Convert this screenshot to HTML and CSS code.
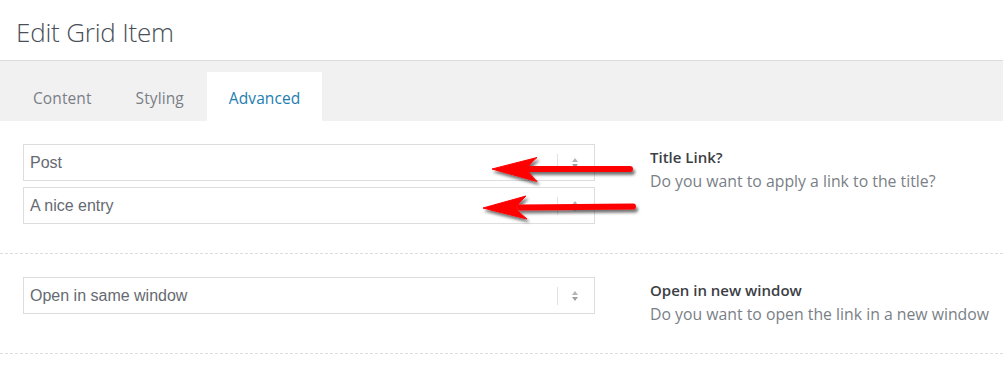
FILE: index.html
```html
<!DOCTYPE html>
<html lang="en">
<head>
    <meta charset="UTF-8" />
    <meta name="viewport" content="width=device-width, initial-scale=1.0" />
    <title>Edit Grid Item</title>
    <link rel="stylesheet" href="styles.css">
</head>
<body>
    <div class="modal">
        <div class="modal__header">
            <h1 class="modal__title">Edit Grid Item</h1>
        </div>
        <ul class="modal-tabs">
            <li class="modal-tabs__item">Content</li>
            <li class="modal-tabs__item">Styling</li>
            <li class="modal-tabs__item modal-tabs__item--active">Advanced</li>
        </ul>
        <div class="modal__body">
            <div class="field-row">
                <div class="field-row__inputs">
                    <div class="select-box">
                        <span class="select-box__value">Post</span>
                        <span class="select-box__caret"></span>
                    </div>
                    <div class="select-box">
                        <span class="select-box__value">A nice entry</span>
                        <span class="select-box__caret"></span>
                    </div>
                </div>
                <div class="field-row__label">
                    <div class="field-label__title">Title Link?</div>
                    <div class="field-label__desc">Do you want to apply a link to the title?</div>
                </div>
            </div>
            <div class="field-row field-row--last">
                <div class="field-row__inputs">
                    <div class="select-box">
                        <span class="select-box__value">Open in same window</span>
                        <span class="select-box__caret"></span>
                    </div>
                </div>
                <div class="field-row__label">
                    <div class="field-label__title">Open in new window</div>
                    <div class="field-label__desc">Do you want to open the link in a new window</div>
                </div>
            </div>
        </div>

        <!-- annotation arrows drawn over the screenshot -->
        <svg class="annotation" width="1003" height="371" viewBox="0 0 1003 371">
            <defs>
                <filter id="arrow-shadow" x="-20%" y="-50%" width="140%" height="200%">
                    <feDropShadow dx="2" dy="3" stdDeviation="1.6" flood-color="#000" flood-opacity="0.55" />
                </filter>
            </defs>
            <g fill="#f00" stroke="#f00" filter="url(#arrow-shadow)">
                <line x1="528" y1="169" x2="630" y2="169" stroke-width="6" stroke-linecap="round" />
                <path d="M492 169 L537 157.5 Q530 163 527 169 Q530 175 537 181.5 Z" stroke-width="1" stroke-linejoin="round" />
                <line x1="520" y1="207.5" x2="633" y2="206.5" stroke-width="6" stroke-linecap="round" />
                <path d="M483 208 L526 196 Q519 202 516 208 Q519 213 527 219 Z" stroke-width="1" stroke-linejoin="round" />
            </g>
        </svg>
    </div>
</body>
</html>
```

FILE: styles.css
```css
/* General styles */
body {
  margin: 0;
  background: #fff;
  font-family: "Open Sans", "Noto Sans", sans-serif;
}

.modal {
  position: relative;
  width: 1003px;
  height: 371px;
  overflow: hidden;
}

.modal__header {
  height: 61px;
  border-bottom: 1px solid #dcdcdc;
  box-sizing: border-box;
  padding: 0 16px;
}

.modal__title {
  margin: 0;
  font-size: 26px;
  font-weight: 300;
  line-height: 64px;
  color: #4a4f57;
  letter-spacing: -0.2px;
}

/* Tabs */
.modal-tabs {
  display: flex;
  margin: 0;
  padding: 11px 0 0 11px;
  list-style: none;
  background: #f1f1f1;
  height: 60px;
  box-sizing: border-box;
}

.modal-tabs__item {
  padding: 0 22px;
  height: 49px;
  line-height: 53px;
  font-size: 15.5px;
  letter-spacing: 0.1px;
  color: #7a7f87;
}

.modal-tabs__item:nth-child(2) {
  padding-right: 23px;
}

.modal-tabs__item--active {
  background: #fff;
  color: #1e7db0;
}

/* Field rows */
.field-row {
  display: flex;
  align-items: flex-start;
  padding: 23px 0 29px 23px;
  border-bottom: 1px dashed #dcdcdc;
}

.field-row--last {
  padding-bottom: 39px;
}

.field-row__inputs {
  display: flex;
  flex-direction: column;
  gap: 6px;
  width: 572px;
}

.select-box {
  display: flex;
  align-items: center;
  height: 37px;
  border: 1px solid #dddddd;
  box-sizing: border-box;
  padding-left: 6px;
  font-family: "Liberation Sans", Arial, sans-serif;
  font-size: 16px;
  color: #666a70;
}

.select-box__value {
  flex: 1;
}

.select-box__caret {
  position: relative;
  width: 36px;
  height: 18px;
  border-left: 1px solid #e2e2e2;
}

.select-box__caret::before,
.select-box__caret::after {
  content: "";
  position: absolute;
  left: 14px;
  border-left: 3.5px solid transparent;
  border-right: 3.5px solid transparent;
}

.select-box__caret::before {
  top: 4px;
  border-bottom: 4px solid #b5b5b5;
}

.select-box__caret::after {
  top: 10px;
  border-top: 4px solid #a0a0a0;
}

.field-row__label {
  height: 37px;
  padding: 3px 0 0 55px;
  box-sizing: border-box;
}

.field-label__title {
  font-size: 15px;
  font-weight: 600;
  line-height: 20px;
  color: #3b3e44;
}

.field-label__desc {
  font-size: 15.8px;
  line-height: 28px;
  color: #7a7f87;
}

/* Red arrows laid over the form */
.annotation {
  position: absolute;
  top: 0;
  left: 0;
  pointer-events: none;
}
```
